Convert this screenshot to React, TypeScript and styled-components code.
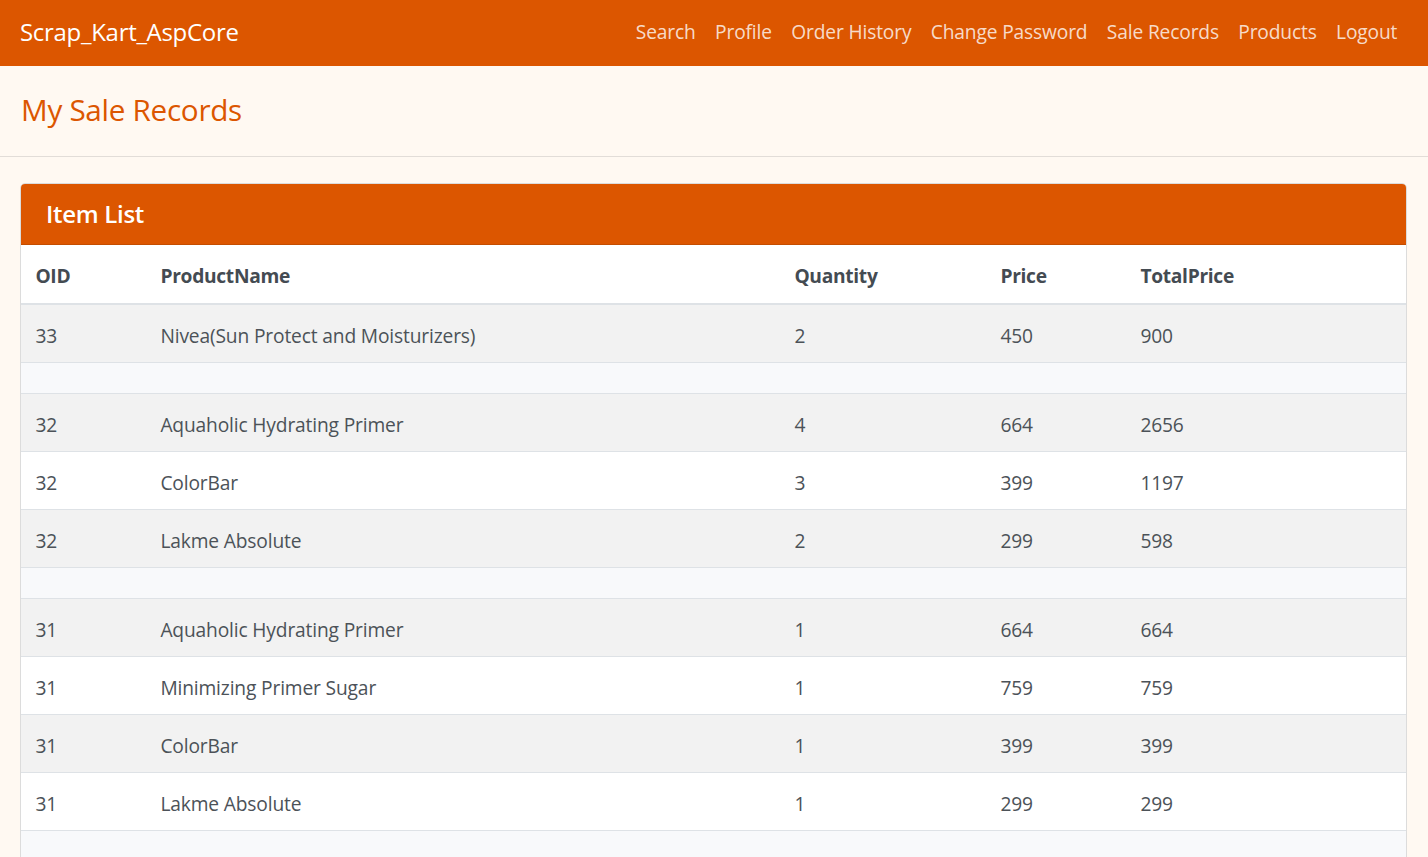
import React from 'react';
import styled, { createGlobalStyle } from 'styled-components';

const GlobalStyle = createGlobalStyle`
	* {
		box-sizing: border-box;
	}
	body {
		margin: 0;
		background: #fff9f2;
		font-family: 'Open Sans', 'Noto Sans', sans-serif;
		font-size: 19.2px;
		line-height: 1.5;
		color: #495057;
	}
`;

const NavBar = styled.nav`
	height: 66px;
	display: flex;
	align-items: center;
	justify-content: space-between;
	padding: 0 21px 2px 20px;
	background: #dc5600;
`;

const Brand = styled.a`
	color: #ffffff;
	font-size: 24px;
	line-height: 36px;
	text-decoration: none;
	letter-spacing: -0.3px;
`;

const NavList = styled.ul`
	display: flex;
	list-style: none;
	margin: 0;
	padding: 0;
`;

const NavLink = styled.a`
	display: block;
	padding: 9px 9.7px;
	color: rgba(255, 255, 255, 0.8);
	text-decoration: none;
	font-size: 19.2px;
	letter-spacing: -0.15px;
`;

const PageHeader = styled.header`
	padding: 24px 21px 26px;
	border-bottom: 1px solid #e2ddd8;
`;

const Title = styled.h3`
	margin: 0;
	font-size: 29.7px;
	font-weight: 500;
	line-height: 40px;
	color: #dc5600;
	letter-spacing: -0.3px;
`;

const Main = styled.main`
	padding: 26px 21px 30px 20px;
`;

const Card = styled.section`
	background: #ffffff;
	border: 1px solid #dcdcdc;
	border-radius: 5px;
	overflow: hidden;
`;

const CardHeader = styled.div`
	background: #dc5600;
	padding: 13px 25px;
	border-bottom: 1px solid #c44d00;
`;

const CardTitle = styled.h4`
	margin: 0;
	color: #ffffff;
	font-size: 24px;
	font-weight: 600;
	line-height: 34px;
	letter-spacing: -0.3px;
`;

const Table = styled.table`
	width: 100%;
	border-collapse: collapse;
	table-layout: fixed;
`;

const Th = styled.th`
	text-align: left;
	padding: 17px 14.4px 12px;
	font-weight: 700;
	color: #444b52;
	letter-spacing: -0.3px;
	border-bottom: 2px solid #dee2e6;
`;

const Row = styled.tr<{ $tone: 'odd' | 'even' | 'gap' }>`
	background: ${({ $tone }) =>
		$tone === 'odd' ? '#f2f2f2' : $tone === 'gap' ? '#f8f9fb' : '#ffffff'};
	&:first-child td {
		height: 59px;
	}
`;

const Td = styled.td`
	padding: 16px 14.4px 12px;
	height: 58px;
	line-height: 28px;
	border-top: 1px solid #dee2e6;
	letter-spacing: -0.15px;
	color: #4c5258;
`;

const GapCell = styled.td`
	height: 31px;
	padding: 0;
	border-top: 1px solid #dee2e6;
`;

const links = [
	'Search',
	'Profile',
	'Order History',
	'Change Password',
	'Sale Records',
	'Products',
	'Logout',
];

type Item = [number, string, number, number, number];

const groups: Item[][] = [
	[[33, 'Nivea(Sun Protect and Moisturizers)', 2, 450, 900]],
	[
		[32, 'Aquaholic Hydrating Primer', 4, 664, 2656],
		[32, 'ColorBar', 3, 399, 1197],
		[32, 'Lakme Absolute', 2, 299, 598],
	],
	[
		[31, 'Aquaholic Hydrating Primer', 1, 664, 664],
		[31, 'Minimizing Primer Sugar', 1, 759, 759],
		[31, 'ColorBar', 1, 399, 399],
		[31, 'Lakme Absolute', 1, 299, 299],
	],
];

export default function App() {
	let index = 0;
	const rows: React.ReactNode[] = [];
	groups.forEach((group, g) => {
		group.forEach((item) => {
			index += 1;
			rows.push(
				<Row key={`r${g}-${index}`} $tone={index % 2 ? 'odd' : 'even'}>
					{item.map((value, i) => (
						<Td key={i}>{value}</Td>
					))}
				</Row>
			);
		});
		index += 1;
		rows.push(
			<Row key={`gap${g}`} $tone="gap">
				<GapCell colSpan={5} />
			</Row>
		);
	});

	return (
		<>
			<GlobalStyle />
			<NavBar>
				<Brand href="#">Scrap_Kart_AspCore</Brand>
				<NavList>
					{links.map((link) => (
						<li key={link}>
							<NavLink href="#">{link}</NavLink>
						</li>
					))}
				</NavList>
			</NavBar>
			<PageHeader>
				<Title>My Sale Records</Title>
			</PageHeader>
			<Main>
				<Card>
					<CardHeader>
						<CardTitle>Item List</CardTitle>
					</CardHeader>
					<Table>
						<colgroup>
							<col style={{ width: 125 }} />
							<col style={{ width: 634 }} />
							<col style={{ width: 206 }} />
							<col style={{ width: 140 }} />
							<col />
						</colgroup>
						<thead>
							<tr>
								<Th>OID</Th>
								<Th>ProductName</Th>
								<Th>Quantity</Th>
								<Th>Price</Th>
								<Th>TotalPrice</Th>
							</tr>
						</thead>
						<tbody>{rows}</tbody>
					</Table>
				</Card>
			</Main>
		</>
	);
}
